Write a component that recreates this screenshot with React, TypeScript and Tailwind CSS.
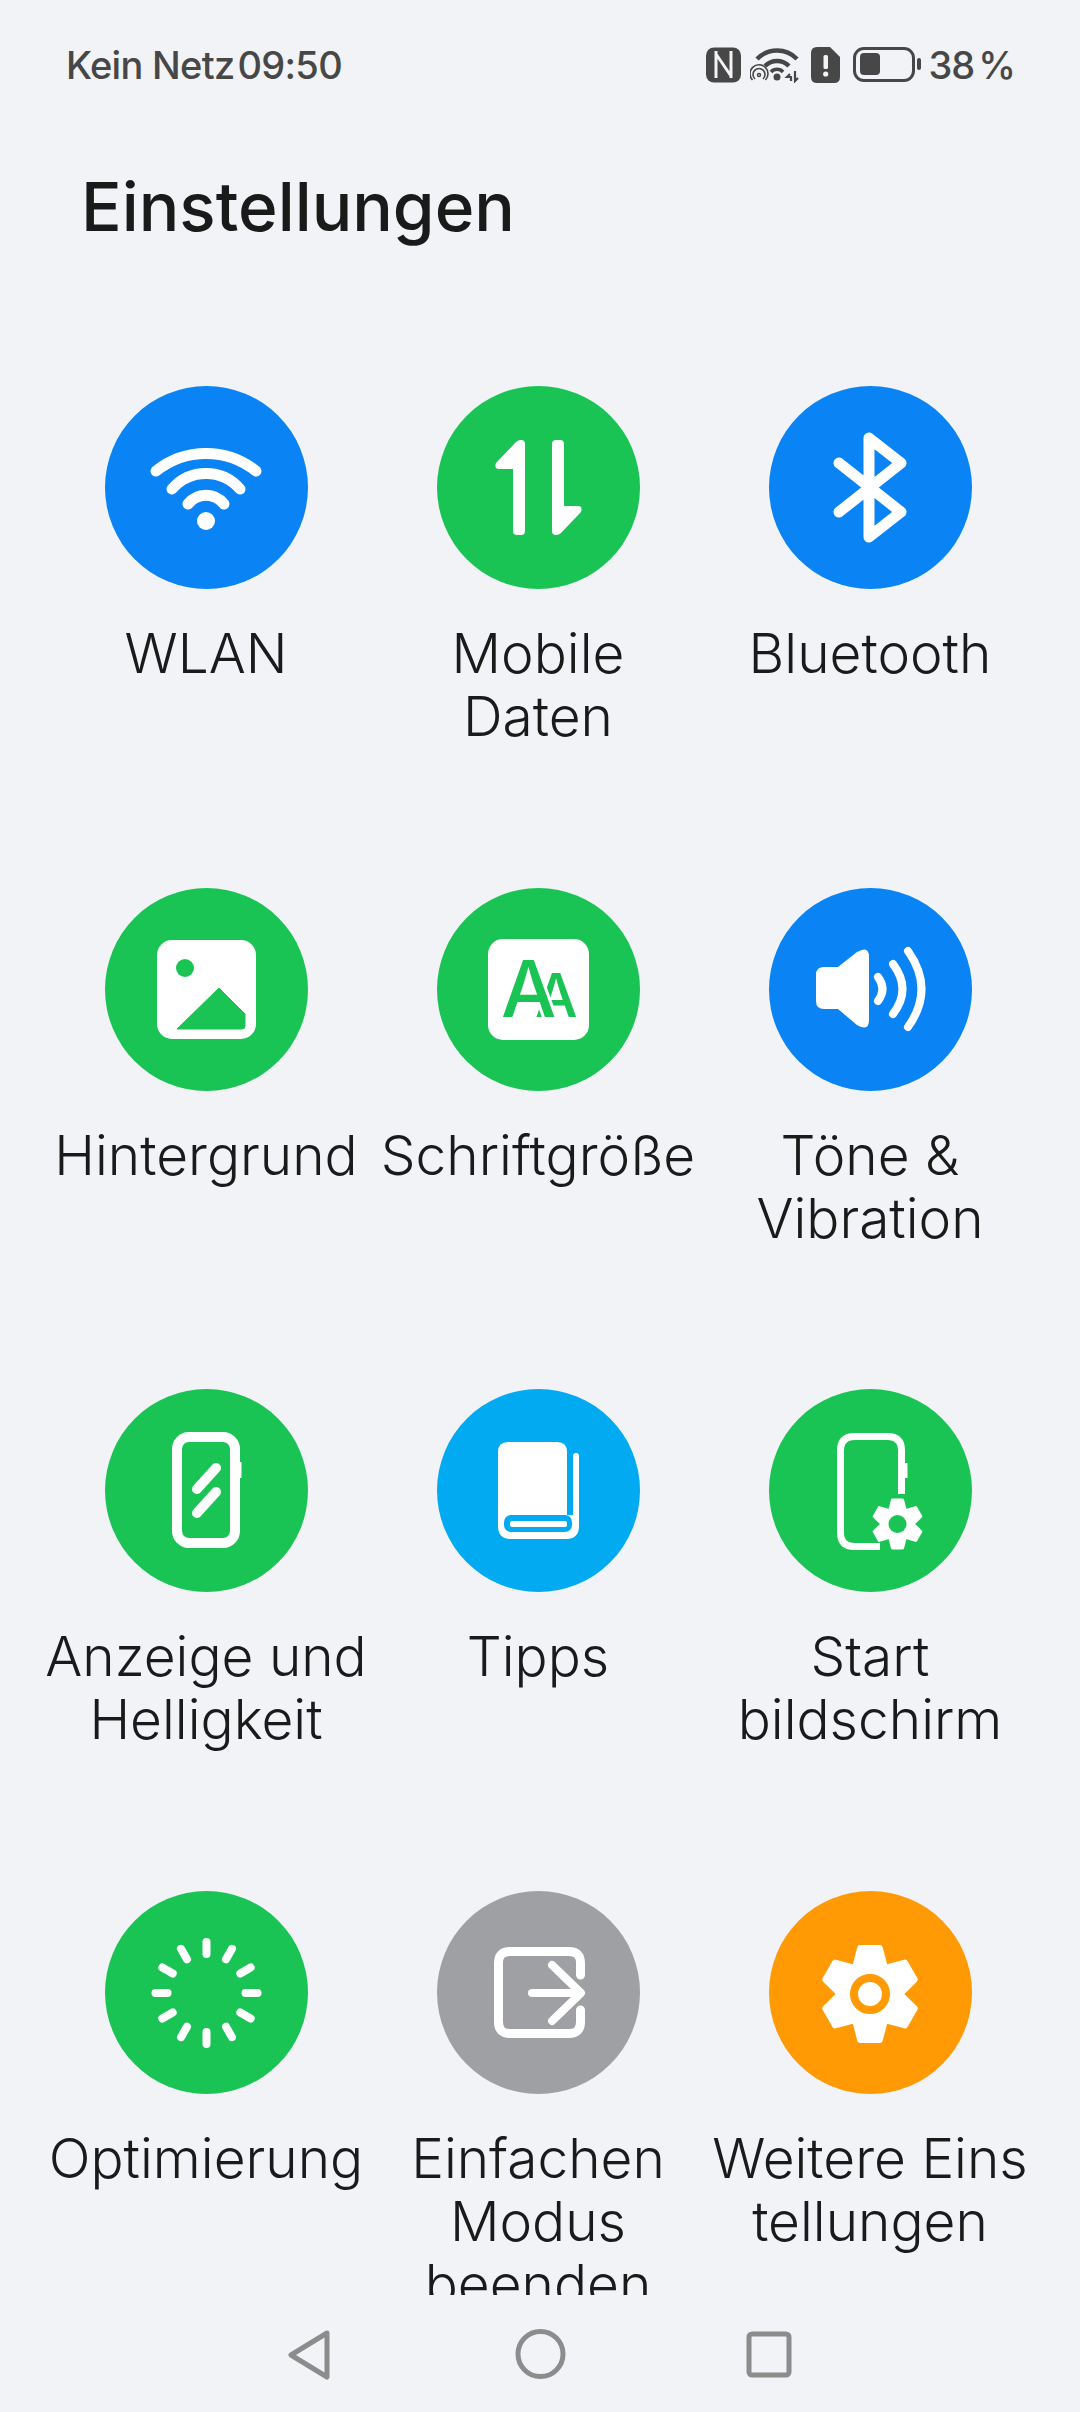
const FONT = "font-['Inter','Noto_Sans',sans-serif]";

// Gear outline shared by the orange tile and the home screen tile
function gearPath(cx: number, cy: number, tip: number, root: number) {
  const pts: string[] = [];
  for (let i = 0; i < 6; i++) {
    const mid = -90 + i * 60;
    for (const [offset, r] of [
      [-30, root],
      [-12, tip],
      [12, tip],
    ] as const) {
      const a = ((mid + offset) * Math.PI) / 180;
      pts.push(`${(cx + r * Math.cos(a)).toFixed(1)} ${(cy + r * Math.sin(a)).toFixed(1)}`);
    }
  }
  return `M${pts.join("L")}Z`;
}

const WifiIcon = () => (
  <g fill="none" stroke="#fff" strokeWidth="11" strokeLinecap="round">
    <path d="M51 85A80 80 0 0 1 151 85" />
    <path d="M67 103A45 45 0 0 1 135 103" />
    <path d="M83 118A23 23 0 0 1 119 118" />
    <circle cx="101" cy="135" r="9" fill="#fff" stroke="none" />
  </g>
);

const DataIcon = () => (
  <g fill="#fff">
    <path d="M84 54Q88 54 88 58V145Q88 149 84 149H80Q76 149 76 145V83H62Q57 83 59 77L79 56Q81 54 84 54Z" />
    <path transform="rotate(180 101.5 101.5)" d="M84 54Q88 54 88 58V145Q88 149 84 149H80Q76 149 76 145V83H62Q57 83 59 77L79 56Q81 54 84 54Z" />
  </g>
);

const BluetoothIcon = () => (
  <path d="M70 77L132 126L100 151V52L132 77L70 126" fill="none" stroke="#fff" strokeWidth="11" strokeLinejoin="round" strokeLinecap="round" />
);

const ImageIcon = () => (
  <g>
    <rect x="52" y="52" width="99" height="99" rx="15" fill="#fff" />
    <circle cx="80" cy="80" r="9" fill="#1ac454" />
    <path d="M114 100L140 126V138Q140 141 137 141H72Z" fill="#1ac454" stroke="#1ac454" strokeWidth="1" strokeLinejoin="round" />
  </g>
);

const FontIcon = () => (
  <g fontFamily="Inter, sans-serif" fontWeight="500" fill="#1ac454">
    <rect x="51" y="51" width="101" height="101" rx="15" fill="#fff" />
    <text y="129">
      <tspan x="98" fontSize="60">A</tspan>
      <tspan x="64" fontSize="78" stroke="#fff" strokeWidth="6" paintOrder="stroke">A</tspan>
    </text>
  </g>
);

const SoundIcon = () => (
  <g>
    <path d="M55 79H69L88 64Q100 57 100 69V132Q100 144 88 137L69 121H55Q47 121 47 113V87Q47 79 55 79Z" fill="#fff" />
    <g fill="none" stroke="#fff" strokeWidth="8" strokeLinecap="round">
      <path d="M109 89Q118 101 109 113" />
      <path d="M124 76Q143 101 124 126" />
      <path d="M139 63Q166 101 139 139" />
    </g>
  </g>
);

const DisplayIcon = () => (
  <g fill="none" stroke="#fff">
    <rect x="72" y="48" width="58" height="106" rx="12" strokeWidth="10" />
    <path d="M135 73V89" strokeWidth="3" />
    <path d="M111 79L92 100M111 103L92 124" strokeWidth="10" strokeLinecap="round" />
  </g>
);

const BookIcon = () => (
  <g>
    <path d="M61 63Q61 53 71 53H120Q130 53 130 63V126H136V67Q136 64 139 64Q142 64 142 67V137Q142 150 129 150H74Q61 150 61 137Z" fill="#fff" />
    <rect x="67" y="126" width="68" height="17" rx="7" fill="#02aaf2" />
    <rect x="73" y="132" width="57" height="6" rx="2" fill="#fff" />
  </g>
);

const HomeIcon = () => (
  <g>
    <path d="M132.5 105V61.5Q132.5 47.5 118.5 47.5H85.5Q71.5 47.5 71.5 61.5V143.5Q71.5 157.5 85.5 157.5H111" fill="none" stroke="#fff" strokeWidth="7" />
    <path d="M137 74V89" stroke="#fff" strokeWidth="3" />
    <path d={gearPath(128.5, 135, 24.5, 15.5)} fill="#fff" stroke="#fff" strokeWidth="3" strokeLinejoin="round" />
    <circle cx="128.5" cy="135" r="9" fill="#1ac454" />
  </g>
);

const SpinnerIcon = () => (
  <g stroke="#fff" strokeWidth="8" strokeLinecap="round">
    {Array.from({ length: 12 }, (_, i) => (
      <line key={i} x1="101.5" y1="51" x2="101.5" y2="63" transform={`rotate(${i * 30} 101.5 102)`} />
    ))}
  </g>
);

const ExitIcon = () => (
  <g fill="none" stroke="#fff" strokeLinecap="round" strokeLinejoin="round">
    <path d="M143.5 84V72Q143.5 60.5 132 60.5H73Q61.5 60.5 61.5 72V131Q61.5 142.5 73 142.5H132Q143.5 142.5 143.5 131V119" strokeWidth="9" />
    <path d="M95 102H143M115 74L144 102L115 130" strokeWidth="8" />
  </g>
);

const GearIcon = () => (
  <g>
    <path d={gearPath(101, 103, 47, 30)} fill="#fff" stroke="#fff" strokeWidth="6" strokeLinejoin="round" />
    <circle cx="101" cy="103" r="16" fill="#fff" stroke="#ff9a05" strokeWidth="8" />
  </g>
);

const tiles = [
  { label: "WLAN", bg: "bg-[#0a84f5]", icon: <WifiIcon /> },
  { label: "Mobile\nDaten", bg: "bg-[#1ac454]", icon: <DataIcon /> },
  { label: "Bluetooth", bg: "bg-[#0a84f5]", icon: <BluetoothIcon /> },
  { label: "Hintergrund", bg: "bg-[#1ac454]", icon: <ImageIcon /> },
  { label: "Schriftgröße", bg: "bg-[#1ac454]", icon: <FontIcon /> },
  { label: "Töne &\nVibration", bg: "bg-[#0a84f5]", icon: <SoundIcon /> },
  { label: "Anzeige und\nHelligkeit", bg: "bg-[#1ac454]", icon: <DisplayIcon /> },
  { label: "Tipps", bg: "bg-[#02aaf2]", icon: <BookIcon /> },
  { label: "Start\nbildschirm", bg: "bg-[#1ac454]", icon: <HomeIcon /> },
  { label: "Optimierung", bg: "bg-[#1ac454]", icon: <SpinnerIcon /> },
  { label: "Einfachen\nModus\nbeenden", bg: "bg-[#9fa0a4]", icon: <ExitIcon /> },
  { label: "Weitere Eins\ntellungen", bg: "bg-[#ff9a05]", icon: <GearIcon /> },
];

function StatusIcons() {
  return (
    <div className="flex items-center">
      <svg width="35" height="36" viewBox="0 0 35 36">
        <rect width="35" height="35" y="0.5" rx="8" fill="#474747" />
        <path d="M10 4V31M25 4V31M10 7L25 29" fill="none" stroke="#f1f3f7" strokeWidth="3" />
      </svg>
      <svg className="ml-[9px]" width="50" height="36" viewBox="0 0 50 36" fill="none" stroke="#474747">
        <path d="M7 12A28 28 0 0 1 47 12" strokeWidth="4.5" />
        <path d="M15 19A17 17 0 0 1 39 19" strokeWidth="4.5" />
        <path d="M21 25A8 8 0 0 1 33 25" strokeWidth="3.5" />
        <circle cx="27" cy="30" r="3.5" fill="#474747" stroke="none" />
        <circle cx="9" cy="28" r="1.5" strokeWidth="1.5" />
        <path d="M5 32A6 6 0 1 1 13 32M2.5 33A9 9 0 1 1 15.5 33" strokeWidth="1.6" />
        <path d="M40 27L37 30H41V34M45 24V34L48 31" strokeWidth="2.2" />
      </svg>
      <svg className="ml-[11px]" width="29" height="36" viewBox="0 0 29 36">
        <path d="M6 0H19L29 10V30Q29 36 23 36H6Q0 36 0 30V6Q0 0 6 0Z" fill="#474747" />
        <rect x="12.5" y="8" width="4.5" height="14" rx="1.5" fill="#f1f3f7" />
        <circle cx="14.7" cy="27" r="2.6" fill="#f1f3f7" />
      </svg>
      <svg className="ml-[13px]" width="68" height="36" viewBox="0 0 68 36">
        <rect x="1.5" y="1.5" width="59" height="32" rx="9.5" fill="none" stroke="#474747" strokeWidth="3" />
        <rect x="7" y="6" width="20" height="22" rx="4" fill="#474747" />
        <rect x="64" y="11" width="4" height="12" rx="2" fill="#474747" />
      </svg>
    </div>
  );
}

export default function App() {
  return (
    <div className={`flex h-[2412px] w-[1080px] flex-col overflow-hidden bg-[#f1f3f7] ${FONT}`}>
      {/* Status bar */}
      <div className="flex h-[130px] shrink-0 items-center justify-between pl-[66px] pr-[65px] text-[38px] font-medium leading-none text-[#474747]">
        <div className="flex gap-[3px] tracking-[-0.7px]">
          <span>Kein Netz</span>
          <span>09:50</span>
        </div>
        <div className="flex items-center gap-[7px]">
          <StatusIcons />
          <span className="tracking-[-1px] [word-spacing:-5px]">38 %</span>
        </div>
      </div>

      <h1 className="ml-[81px] h-[256px] shrink-0 text-[67.5px] font-medium leading-[154px] text-[#1a1a1a]">
        Einstellungen
      </h1>

      {/* Tile grid, clipped where the list runs into the nav bar */}
      <div className="h-[1909px] shrink-0 overflow-hidden pl-[40px]">
        <div className="grid grid-cols-[repeat(3,332px)] auto-rows-[501.5px]">
          {tiles.map((tile) => (
            <div key={tile.label} className="flex flex-col items-center">
              <div className={`h-[203px] w-[203px] rounded-full ${tile.bg}`}>
                <svg viewBox="0 0 203 203" width="203" height="203">
                  {tile.icon}
                </svg>
              </div>
              <div className="mt-[33px] whitespace-pre-line text-center text-[55px] font-light leading-[63px] text-[#1a1a1a]">
                {tile.label}
              </div>
            </div>
          ))}
        </div>
      </div>

      {/* Nav bar */}
      <div className="flex flex-1 items-start justify-center pt-[33px]">
        <svg width="520" height="52" viewBox="0 0 520 52" fill="none" stroke="#8c8c8c" strokeWidth="5" strokeLinejoin="round">
          <path d="M47 5L11 27L47 49Z" />
          <circle cx="260.5" cy="26" r="22.5" />
          <rect x="469" y="6" width="40" height="41" rx="3" />
        </svg>
      </div>
    </div>
  );
}
